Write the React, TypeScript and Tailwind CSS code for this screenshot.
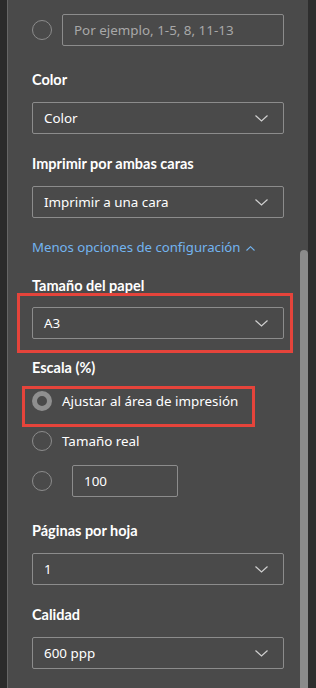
import type { ReactNode } from 'react';

const FONT = { fontFamily: '"Noto Sans", "Open Sans", sans-serif' };

function Chevron() {
  return (
    <svg width="13" height="7" viewBox="0 0 13 7" className="shrink-0">
      <polyline points="0.5,0.5 6.5,6 12.5,0.5" fill="none" stroke="#d0d0d0" strokeWidth="1.2" />
    </svg>
  );
}

function Select({ value }: { value: string }) {
  return (
    <div className="h-[32px] w-full flex items-center justify-between border border-[#8c8c8c] rounded-[2px] pl-[11px] pr-[15px] text-[13.4px] text-white">
      <span>{value}</span>
      <Chevron />
    </div>
  );
}

function Label({ children, className = '' }: { children: ReactNode; className?: string }) {
  return (
    <div
      className={`h-[20px] leading-[20px] text-[14.5px] font-bold text-white font-['Lato',sans-serif] ${className}`}
    >
      {children}
    </div>
  );
}

function Radio({ checked = false }: { checked?: boolean }) {
  return (
    <div
      className={
        checked
          ? 'w-[20px] h-[20px] rounded-full border-[5px] border-[#8f8f8f] shrink-0'
          : 'w-[20px] h-[20px] rounded-full border-[1.5px] border-[#8c8c8c] shrink-0'
      }
    />
  );
}

export default function App() {
  return (
    <div className="w-[316px] h-[688px] flex overflow-hidden bg-[#4a4a4a]" style={FONT}>
      <div className="w-[7px] bg-[#2b2b2b]" />
      <div className="w-[1px] bg-[#666666]" />
      <div className="flex-1 flex flex-col pl-[24px] pr-[16px]">
        <div className="mt-[14px] flex items-center gap-[10px]">
          <Radio />
          <div className="h-[32px] flex-1 flex items-center border border-[#8c8c8c] rounded-[2px] px-[11px] text-[13.4px] text-[#a8a8a8]">
            Por ejemplo, 1-5, 8, 11-13
          </div>
        </div>

        <Label className="mt-[24px]">Color</Label>
        <div className="mt-[12px]"><Select value="Color" /></div>

        <Label className="mt-[20px]">Imprimir por ambas caras</Label>
        <div className="mt-[12px]"><Select value="Imprimir a una cara" /></div>

        <div className="mt-[20px] h-[20px] flex items-center gap-[6px] text-[13.2px] text-[#73b4f0]">
          <span>Menos opciones de configuración</span>
          <svg width="9" height="5" viewBox="0 0 9 5">
            <polyline points="0.5,4.5 4.5,0.7 8.5,4.5" fill="none" stroke="#73b4f0" strokeWidth="1.1" />
          </svg>
        </div>

        <Label className="mt-[18px]">Tamaño del papel</Label>
        <div className="mt-[11px] relative">
          <Select value="A3" />
          <div className="absolute -left-[15px] -right-[9px] -top-[14px] -bottom-[14px] border-[3px] border-[#e5443b] pointer-events-none" />
        </div>

        <Label className="mt-[19px]">Escala (%)</Label>
        <div className="mt-[13px] relative h-[20px] flex items-center gap-[10px] text-[13.4px] text-white">
          <Radio checked />
          <span>Ajustar al área de impresión</span>
          <div className="absolute -left-[10px] w-[233px] -top-[5px] h-[41px] border-[3px] border-[#e5443b] pointer-events-none" />
        </div>
        <div className="mt-[20px] h-[20px] flex items-center gap-[10px] text-[13.4px] text-white">
          <Radio />
          <span>Tamaño real</span>
        </div>
        <div className="mt-[14px] h-[32px] flex items-center gap-[20px] text-[13.4px] text-white">
          <Radio />
          <div className="h-[32px] w-[106px] flex items-center border border-[#8c8c8c] rounded-[2px] px-[11px]">100</div>
        </div>

        <Label className="mt-[24px]">Páginas por hoja</Label>
        <div className="mt-[12px]"><Select value="1" /></div>

        <Label className="mt-[20px]">Calidad</Label>
        <div className="mt-[12px]"><Select value="600 ppp" /></div>
      </div>
      <div className="w-[8px] flex flex-col">
        <div className="h-[250px]" />
        <div className="flex-1 bg-[#8b8b8b] rounded-t-full" />
      </div>
      <div className="w-[8px] bg-[#2e2e2e]" />
    </div>
  );
}
